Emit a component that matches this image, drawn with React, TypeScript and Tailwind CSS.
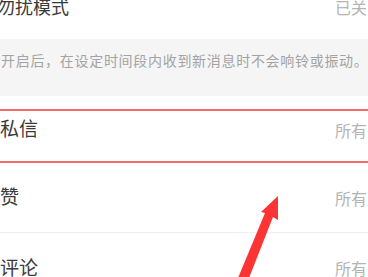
export default function App() {
  return (
    <div
      className="relative w-[368px] h-[277px] overflow-hidden bg-white"
      style={{ fontFamily: '"Noto Sans CJK SC", "Noto Sans", sans-serif' }}
    >
      {/* 勿扰模式 row, scrolled partly out of view */}
      <div className="-mt-[26px] h-[65px] flex items-center -ml-[3px]">
        <span className="flex-1 text-[18px] text-[#3a3a3a]">勿扰模式</span>
        <span className="w-[33px] whitespace-nowrap text-[16px] text-[#b4b4b4]">已关闭</span>
      </div>

      {/* hint band */}
      <div className="h-[57px] bg-[#f5f5f5] pt-[11px] pl-[1px] whitespace-nowrap text-[14px] tracking-[0.7px] text-[#a3a3a3]">
        开启后，在设定时间段内收到新消息时不会响铃或振动。
      </div>

      <Row label="私信" height="h-[67px]" />
      <Row label="赞" height="h-[70px]" divider />
      <Row label="评论" height="h-[70px]" />

      {/* red annotation box */}
      <div className="absolute left-0 right-0 top-[109px] h-[54px] border-y-2 border-[#f36a6a]" />

      {/* red annotation arrow */}
      <svg className="absolute left-0 top-0" width="368" height="277" viewBox="0 0 368 277">
        <polygon
          points="278,196 278,220 273,217 249,278 238,278 265,213 261,212"
          fill="#fd3434"
        />
      </svg>
    </div>
  );
}

const Row = ({ label, height, divider }: { label: string; height: string; divider?: boolean }) => (
  <div className={`${height} flex items-center ${divider ? "border-b border-[#eeeeee]" : ""}`}>
    <span className="flex-1 text-[19px] text-[#3a3a3a] -mt-[2px]">{label}</span>
    <span className="w-[33px] whitespace-nowrap text-[16px] text-[#b4b4b4]">所有人</span>
  </div>
);
